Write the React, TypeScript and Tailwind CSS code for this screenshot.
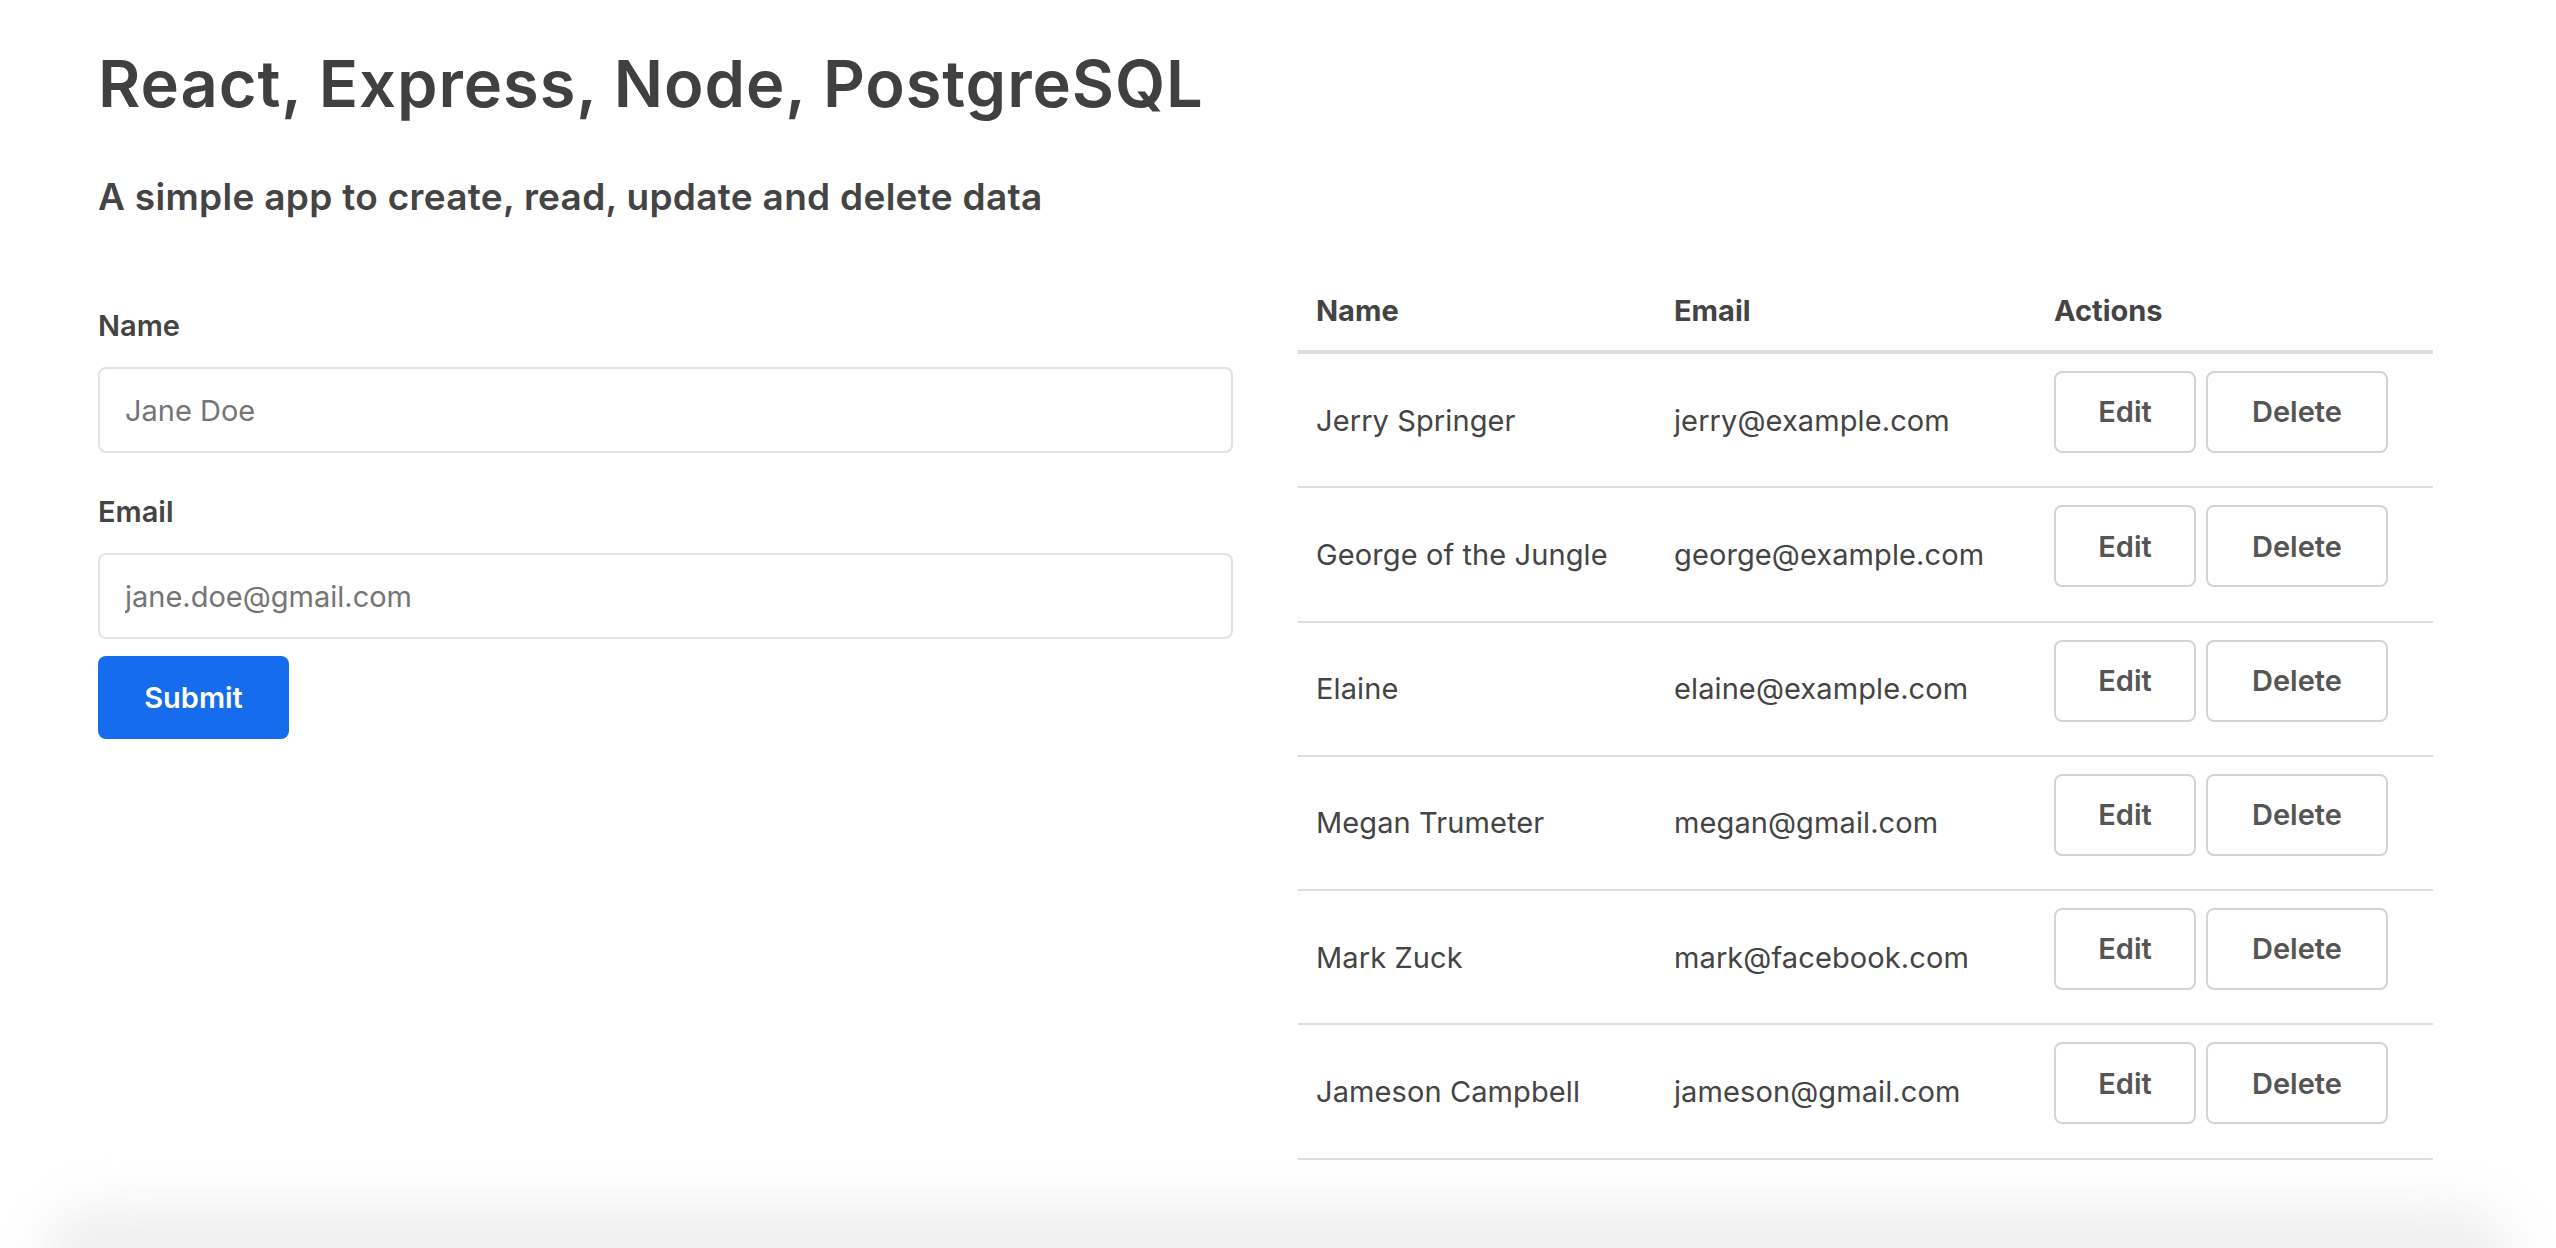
const users = [
  { name: "Jerry Springer", email: "jerry@example.com" },
  { name: "George of the Jungle", email: "george@example.com" },
  { name: "Elaine", email: "elaine@example.com" },
  { name: "Megan Trumeter", email: "megan@gmail.com" },
  { name: "Mark Zuck", email: "mark@facebook.com" },
  { name: "Jameson Campbell", email: "jameson@gmail.com" },
];

function Field({ label, placeholder, first }: { label: string; placeholder: string; first?: boolean }) {
  return (
    <div className={first ? "mt-[33px]" : "mt-[41px]"}>
      <label className="block text-[29px] leading-[35px] font-semibold text-[#444]">{label}</label>
      <input
        type="text"
        placeholder={placeholder}
        className="mt-[24px] block w-full h-[86px] px-[25px] text-[29px] text-[#444] placeholder:text-[#757575] bg-white border-2 border-[#e2e2e2] rounded-[8px] outline-none"
      />
    </div>
  );
}

export default function App() {
  return (
    <div className="h-[1248px] overflow-hidden flex flex-col bg-white text-[#444] font-[Inter,sans-serif]">
      <div className="pl-[98px] pr-[123px] pt-[45px]">
        <h1 className="text-[65px] leading-[78px] font-semibold tracking-[0.9px] text-[#404040]">
          React, Express, Node, PostgreSQL
        </h1>
        <h2 className="mt-[52px] text-[37px] leading-[44px] font-semibold tracking-[0.3px] text-[#444]">
          A simple app to create, read, update and delete data
        </h2>

        <div className="mt-[56px] grid grid-cols-2 gap-[65px]">
          {/* form */}
          <form onSubmit={(e) => e.preventDefault()}>
            <Field label="Name" placeholder="Jane Doe" first />
            <Field label="Email" placeholder="jane.doe@gmail.com" />
            <button
              type="submit"
              className="mt-[17px] w-[191px] h-[83px] rounded-[8px] bg-[#166cec] text-white text-[29px] font-semibold"
            >
              Submit
            </button>
          </form>

          {/* table */}
          <table className="w-full table-fixed border-collapse self-start">
            <colgroup>
              <col className="w-[358px]" />
              <col className="w-[380px]" />
              <col />
            </colgroup>
            <thead>
              <tr className="border-b-4 border-[#dedede]">
                {["Name", "Email", "Actions"].map((h) => (
                  <th
                    key={h}
                    className="pl-[18px] pt-[18px] pb-[22px] text-left text-[29px] leading-[35px] font-bold text-[#444]"
                  >
                    {h}
                  </th>
                ))}
              </tr>
            </thead>
            <tbody>
              {users.map((u) => (
                <tr key={u.email} className="border-b-2 border-[#dedede]">
                  <td className="pl-[18px] pt-[17px] pb-[17.3px] align-middle text-[29px] leading-[35px] tracking-[0.1px] text-[#444] whitespace-nowrap">
                    {u.name}
                  </td>
                  <td className="pl-[18px] pt-[17px] pb-[17.3px] align-middle text-[29px] leading-[35px] tracking-[0.1px] text-[#444] whitespace-nowrap">
                    {u.email}
                  </td>
                  <td className="pl-[18px] pt-[17px] pb-[17.3px] align-middle">
                    <div className="flex gap-[10px] mb-[16px]">
                      <button className="w-[142px] h-[82px] border-2 border-[#d4d4d4] rounded-[8px] bg-white text-[29px] font-semibold text-[#555]">
                        Edit
                      </button>
                      <button className="w-[182px] h-[82px] border-2 border-[#d4d4d4] rounded-[8px] bg-white text-[29px] font-semibold text-[#555]">
                        Delete
                      </button>
                    </div>
                  </td>
                </tr>
              ))}
            </tbody>
          </table>
        </div>
      </div>

      {/* soft shadow at the bottom edge */}
      <div className="mt-auto mx-[40px] h-[150px] mb-[-106px] shrink-0 rounded-[60px] bg-[#f0f0f0] blur-[22px]" />
    </div>
  );
}
